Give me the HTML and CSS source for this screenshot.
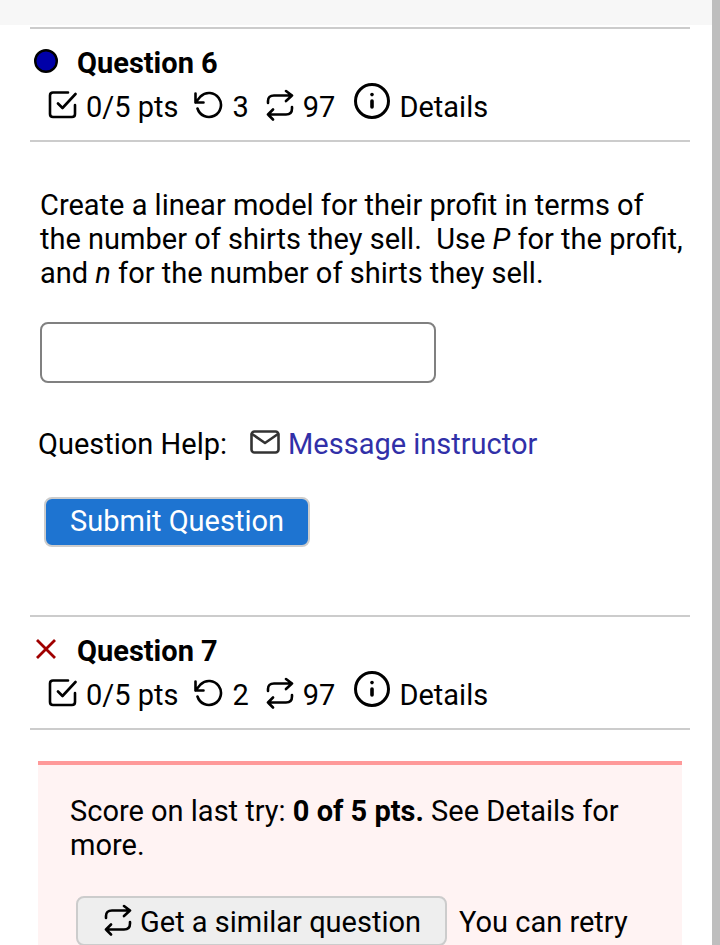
FILE: index.html
```html
<!DOCTYPE html>
<html lang="en">
<head>
  <meta charset="UTF-8" />
  <meta name="viewport" content="width=device-width, initial-scale=1.0" />
  <title>Assessment</title>
  <link rel="stylesheet" href="styles.css">
</head>
<body>
  <svg class="sprite" aria-hidden="true">
    <symbol id="icon-check" viewBox="0 0 30 30">
      <path d="M21 2.5H6Q3 2.5 3 5.5V24Q3 27 6 27H25Q28 27 28 24V15M11 13.5L15.5 18L28.5 4" />
    </symbol>
    <symbol id="icon-undo" viewBox="0 0 30 30">
      <path d="M1.5 3.5V12.5H9.5M1.5 12.5L6.5 6.5A12 12 0 1 1 3.5 18.5" />
    </symbol>
    <symbol id="icon-repeat" viewBox="0 0 30 32">
      <path d="M4 14V12Q4 6.5 10 6.5H28M22 2L28 6.5L22 12M28 18V19.5Q28 25.5 22 25.5H4M9 20.5L4 25.5L9 30.5" />
    </symbol>
    <symbol id="icon-info" viewBox="0 0 36 36">
      <circle cx="18" cy="18" r="16.5" stroke-width="3" />
      <path d="M18 18V24" stroke-width="3.6" />
      <path d="M18 11.5V11.6" stroke-width="3.6" />
    </symbol>
    <symbol id="icon-mail" viewBox="0 0 30 24">
      <rect x="1.5" y="1.5" width="27" height="21" rx="3" />
      <path d="M2 4L15 13L28 4" />
    </symbol>
  </svg>

  <div class="topbar"></div>
  <main>
    <section class="question">
      <header class="question-header">
        <div class="title-row">
          <svg class="status" viewBox="0 0 24 24" role="img" aria-label="Unattempted"><circle cx="12" cy="12" r="10.8" fill="#0000a8" stroke="#000" stroke-width="2.4" /></svg>
          <h2>Question 6</h2>
        </div>
        <div class="info-row">
          <span class="stat"><svg class="icon"><use href="#icon-check" /></svg>0/5 pts</span>
          <span class="stat"><svg class="icon"><use href="#icon-undo" /></svg>3</span>
          <span class="stat"><svg class="icon"><use href="#icon-repeat" /></svg>97</span>
          <button type="button" class="details"><svg class="icon info"><use href="#icon-info" /></svg>Details</button>
        </div>
      </header>

      <div class="question-body">
        <p id="prompt">Create a linear model for their profit in terms of the number of shirts they sell.&nbsp; Use <em>P</em> for the profit, and <em>n</em> for the number of shirts they sell.</p>
        <input type="text" class="answer" aria-labelledby="prompt" />
      </div>

      <div class="help">
        <span>Question Help:</span>
        <svg class="icon mail"><use href="#icon-mail" /></svg>
        <a href="#">Message instructor</a>
      </div>
      <button type="submit" class="btn primary">Submit Question</button>
    </section>

    <section class="question">
      <header class="question-header">
        <div class="title-row">
          <svg class="status" viewBox="0 0 24 24" role="img" aria-label="Incorrect"><path d="M3 3L21 21M21 3L3 21" fill="none" stroke="#a00000" stroke-width="2.8" /></svg>
          <h2>Question 7</h2>
        </div>
        <div class="info-row">
          <span class="stat"><svg class="icon"><use href="#icon-check" /></svg>0/5 pts</span>
          <span class="stat"><svg class="icon"><use href="#icon-undo" /></svg>2</span>
          <span class="stat"><svg class="icon"><use href="#icon-repeat" /></svg>97</span>
          <button type="button" class="details"><svg class="icon info"><use href="#icon-info" /></svg>Details</button>
        </div>
      </header>

      <div class="feedback">
        <p>Score on last try: <strong>0 of 5 pts.</strong> See Details for more.</p>
        <div class="retry">
          <button type="button" class="btn"><svg class="icon"><use href="#icon-repeat" /></svg>Get a similar question</button>
          <span>You can retry</span>
        </div>
      </div>
    </section>
  </main>
  <div class="scroll-track"></div>
</body>
</html>
```
FILE: styles.css
```css
* {
  box-sizing: border-box;
}
body {
  height: 100vh;
  margin: 0;
  overflow: hidden;
  background: #fff;
  color: #000;
  font-family: Roboto, sans-serif;
  font-size: 29px;
  line-height: 34px;
}
h2, p {
  margin: 0;
  font-size: 29px;
}
button, input {
  font: inherit;
  color: inherit;
}
.sprite {
  display: none;
}
.topbar {
  height: 25px;
  background: #f7f7f7;
}
main {
  padding: 2px 30px 0;
}

/* question header */
.question-header {
  border-top: 2px solid #ccc;
  border-bottom: 2px solid #ccc;
  padding: 17px 4px 16px;
}
.title-row {
  display: flex;
  gap: 19px;
}
.status {
  width: 24px;
  height: 24px;
  margin-top: 3px;
}
.info-row {
  display: flex;
  align-items: center;
  gap: 15px;
  margin-top: 10px;
  padding-left: 13px;
}
.stat, .details {
  display: flex;
  align-items: center;
  gap: 9px;
  height: 34px;
}
.details {
  margin-left: 4px;
  padding: 0;
  border: 0;
  background: none;
}
.icon {
  flex: none;
  width: 30px;
  height: 32px;
  fill: none;
  stroke: currentColor;
  stroke-width: 2.6;
  stroke-linecap: round;
  stroke-linejoin: round;
  margin-bottom: 4px;
}
.icon.info {
  width: 36px;
  height: 36px;
  margin-bottom: 12px;
}

/* question content */
.question-body {
  padding: 46px 4px 0 10px;
}
.answer {
  display: block;
  width: 60%;
  min-width: 396px;
  height: 61px;
  margin-top: 32px;
  padding: 8px;
  border: 2px solid #808080;
  border-radius: 8px;
  background: #fff;
}
.help {
  display: flex;
  align-items: center;
  margin-top: 44px;
  padding-left: 8px;
}
.icon.mail {
  width: 30px;
  height: 24px;
  margin: 0 8px 4px 23px;
  color: #333;
}
a {
  color: #3130a8;
  text-decoration: none;
}
.btn {
  display: flex;
  align-items: center;
  gap: 8px;
  height: 50px;
  padding: 2px 24px 0;
  border: 2px solid #ccc;
  border-radius: 8px;
  background: #eee;
}
.primary {
  margin: 36px 14px 68px;
  padding: 0 24px 2px;
  background: #1e74d1;
  color: #fff;
}

/* result of the last try */
.feedback {
  margin: 31px 8px 0;
  padding: 29px 32px;
  border-top: 4px solid #ff9999;
  background: #fff3f3;
}
.retry {
  display: flex;
  align-items: center;
  gap: 12px;
  margin-top: 34px;
  padding-left: 6px;
}
.retry span {
  padding-top: 2px;
}

.scroll-track {
  position: fixed;
  top: 0;
  right: 0;
  bottom: 0;
  width: 8px;
  background: #bebebe;
}
```
